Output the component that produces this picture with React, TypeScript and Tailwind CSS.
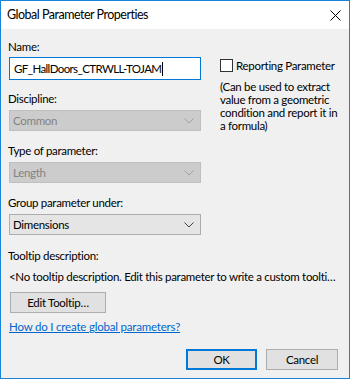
import React from 'react';

const font = { fontFamily: 'Lato, "Noto Sans", Arial, sans-serif' };

function Chevron({ color }: { color: string }) {
  return (
    <svg width="10" height="6" viewBox="0 0 10 6" className="shrink-0">
      <polyline points="0.5,0.5 5,5 9.5,0.5" fill="none" stroke={color} strokeWidth="1" />
    </svg>
  );
}

function Select({ value, disabled }: { value: string; disabled?: boolean }) {
  return (
    <div
      className={`ml-[1px] w-[192px] h-[21px] flex items-center justify-between pl-[3px] pr-[6px] border ${
        disabled ? 'bg-[#cccccc] border-[#bfbfbf] text-[#838383]' : 'bg-[#e5e5e5] border-[#adadad] text-black'
      }`}
    >
      <span className="leading-none">{value}</span>
      <Chevron color={disabled ? '#a0a0a0' : '#444'} />
    </div>
  );
}

export default function App() {
  return (
    <div
      className="w-[350px] h-[379px] border border-[#1883d7] flex flex-col text-[11.5px] tracking-[-0.3px] text-black overflow-hidden"
      style={font}
    >
      {/* Title bar */}
      <div className="h-[28px] bg-white flex items-center justify-between pl-[6px] pr-[6px]">
        <span className="text-[12.5px] tracking-[-0.5px] leading-none">Global Parameter Properties</span>
        <svg width="11" height="11" viewBox="0 0 11 11" className="mr-[2px]">
          <path d="M0.5 0.5 L10.5 10.5 M10.5 0.5 L0.5 10.5" stroke="#000" strokeWidth="1" />
        </svg>
      </div>

      {/* Body */}
      <div className="flex-1 bg-[#f0f0f0] flex flex-col pl-[7px] pr-[9px]">
        <div className="flex">
          {/* left column */}
          <div className="w-[194px] shrink-0 flex flex-col">
            <div className="mt-[10px] h-[16px] leading-[16px]">Name:</div>
            <div className="mt-[2px] ml-[1px] w-[192px] h-[23px] bg-white border border-[#0078d7] flex items-center pl-[4px]">
              <span className="leading-none tracking-[-0.6px]">GF_HallDoors_CTRWLL-TOJAM</span>
              <span className="w-[1px] h-[14px] bg-black ml-[1px]" />
            </div>
            <div className="mt-[11px] h-[16px] leading-[16px]">Discipline:</div>
            <div className="mt-[3px]">
              <Select value="Common" disabled />
            </div>
            <div className="mt-[12px] h-[16px] leading-[16px]">Type of parameter:</div>
            <div className="mt-[3px]">
              <Select value="Length" disabled />
            </div>
            <div className="mt-[12px] h-[16px] leading-[16px]">Group parameter under:</div>
            <div className="mt-[3px]">
              <Select value="Dimensions" />
            </div>
          </div>

          {/* right column */}
          <div className="ml-[18px] flex flex-col whitespace-nowrap">
            <div className="mt-[30px] flex items-center h-[13px]">
              <div className="w-[13px] h-[13px] border border-[#333333] bg-white shrink-0" />
              <span className="ml-[3px] leading-none">Reporting Parameter</span>
            </div>
            <div className="mt-[8px] leading-[13px]">
              (Can be used to extract
              <br />
              value from a geometric
              <br />
              condition and report it in
              <br />
              a formula)
            </div>
          </div>
        </div>

        <div className="mt-[13px] h-[16px] leading-[16px]">Tooltip description:</div>
        <div className="mt-[5px] h-[16px] leading-[16px] ml-[1px] whitespace-nowrap">
          &lt;No tooltip description. Edit this parameter to write a custom toolti…
        </div>
        <div className="mt-[7px] ml-[2px] w-[96px] h-[21px] bg-[#e1e1e1] border border-[#adadad] flex items-center justify-center">
          <span className="leading-none">Edit Tooltip…</span>
        </div>
        <div className="mt-[6px] h-[16px] leading-[16px] ml-[1px]">
          <span className="text-[#0066cc] underline tracking-[-0.2px]">How do I create global parameters?</span>
        </div>
        <div className="mt-[14px] flex justify-end gap-[9px] pr-[2px]">
          <div className="w-[71px] h-[21px] bg-[#e1e1e1] border-2 border-[#0078d7] flex items-center justify-center">
            <span className="leading-none">OK</span>
          </div>
          <div className="w-[72px] h-[21px] bg-[#e1e1e1] border border-[#adadad] flex items-center justify-center">
            <span className="leading-none">Cancel</span>
          </div>
        </div>
      </div>
    </div>
  );
}
